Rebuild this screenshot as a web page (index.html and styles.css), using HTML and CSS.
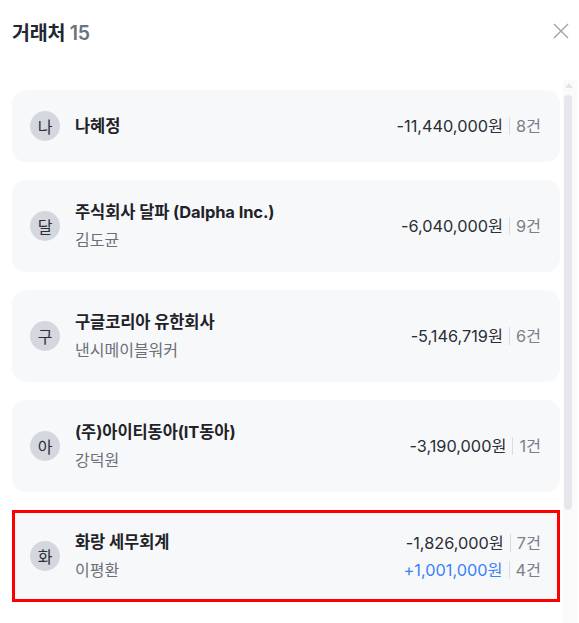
FILE: index.html
```html
<!DOCTYPE html>
<html lang="ko">
<head>
    <meta charset="UTF-8">
    <meta name="viewport" content="width=device-width, initial-scale=1.0">
    <title>거래처</title>
    <link rel="stylesheet" href="styles.css">
</head>
<body>
    <div class="modal">
        <header class="modal-head">
            <h1 class="title">거래처 <span class="count">15</span></h1>
            <button class="close" aria-label="닫기">
                <svg width="16" height="16" viewBox="0 0 16 16"><path d="M1 1L15 15M15 1L1 15" stroke="#9ca3af" stroke-width="1.4" fill="none"/></svg>
            </button>
        </header>

        <div class="body">
            <div class="list">
                <div class="card">
                    <span class="avatar">나</span>
                    <div class="info">
                        <div class="name">나혜정</div>
                    </div>
                    <div class="sums">
                        <div class="sum"><span class="amount">-11,440,000원</span><span class="bar"></span><span class="cnt">8건</span></div>
                    </div>
                </div>

                <div class="card">
                    <span class="avatar">달</span>
                    <div class="info">
                        <div class="name">주식회사 달파 (Dalpha Inc.)</div>
                        <div class="sub">김도균</div>
                    </div>
                    <div class="sums">
                        <div class="sum"><span class="amount">-6,040,000원</span><span class="bar"></span><span class="cnt">9건</span></div>
                    </div>
                </div>

                <div class="card">
                    <span class="avatar">구</span>
                    <div class="info">
                        <div class="name">구글코리아 유한회사</div>
                        <div class="sub">낸시메이블워커</div>
                    </div>
                    <div class="sums">
                        <div class="sum"><span class="amount">-5,146,719원</span><span class="bar"></span><span class="cnt">6건</span></div>
                    </div>
                </div>

                <div class="card">
                    <span class="avatar">아</span>
                    <div class="info">
                        <div class="name">(주)아이티동아(IT동아)</div>
                        <div class="sub">강덕원</div>
                    </div>
                    <div class="sums">
                        <div class="sum"><span class="amount">-3,190,000원</span><span class="bar"></span><span class="cnt">1건</span></div>
                    </div>
                </div>

                <div class="card selected">
                    <span class="avatar">화</span>
                    <div class="info">
                        <div class="name">화랑 세무회계</div>
                        <div class="sub">이평환</div>
                    </div>
                    <div class="sums">
                        <div class="sum"><span class="amount">-1,826,000원</span><span class="bar"></span><span class="cnt">7건</span></div>
                        <div class="sum"><span class="amount plus">+1,001,000원</span><span class="bar"></span><span class="cnt">4건</span></div>
                    </div>
                </div>
            </div>

            <div class="scrollbar">
                <svg class="arrow" width="8" height="5" viewBox="0 0 8 5"><path d="M0 5L4 0L8 5Z" fill="#e3e4e7"/></svg>
                <div class="thumb"></div>
            </div>
        </div>
    </div>
</body>
</html>
```

FILE: styles.css
```css
html, body {
    margin: 0;
    height: 100%;
    overflow: hidden;
}

body {
    font-family: Inter, "Noto Sans CJK KR", sans-serif;
    background: #fff;
    color: #1f2329;
}

.modal {
    display: flex;
    flex-direction: column;
    height: 100%;
}

.modal-head {
    display: flex;
    align-items: center;
    justify-content: space-between;
    height: 62px;
    padding: 0 9px 0 12px;
    flex-shrink: 0;
}

.title {
    margin: 0;
    font-size: 19.5px;
    font-weight: 700;
    color: #222831;
    letter-spacing: -0.2px;
}

.count {
    color: #6b7280;
    font-weight: 600;
}

.close {
    border: 0;
    background: none;
    padding: 0;
    width: 18px;
    height: 18px;
    display: flex;
    align-items: center;
    justify-content: center;
    cursor: pointer;
}

.body {
    flex: 1;
    display: flex;
    margin-top: 18px;
    min-height: 0;
    padding-right: 2px;
}

.list {
    width: 548px;
    padding: 10px 3px 0 12px;
    display: flex;
    flex-direction: column;
    gap: 18px;
    overflow: hidden;
}

.scrollbar {
    width: 14px;
    background: #fafafb;
    display: flex;
    flex-direction: column;
    align-items: flex-start;
}

.arrow {
    margin: 3px 0 0 2px;
}

.thumb {
    margin: 7px 0 0 1px;
    width: 8px;
    height: 415px;
    border-radius: 4px;
    background: #e6e7ea;
}

.card {
    display: flex;
    align-items: center;
    flex-shrink: 0;
    background: #f7f8fa;
    border-radius: 14px;
    padding: 20px 19px 20px 18px;
    min-height: 32px;
}

.card.selected {
    border: 3px solid #f00;
    border-radius: 0;
    padding: 17px 16px 17px 15px;
}

.avatar {
    width: 30px;
    height: 30px;
    border-radius: 50%;
    background: #d4d7dd;
    color: #2b2f36;
    font-size: 16px;
    display: flex;
    align-items: center;
    justify-content: center;
    flex-shrink: 0;
    margin-right: 15px;
}

.info {
    flex: 1;
    display: flex;
    flex-direction: column;
    gap: 4px;
}

.name {
    font-size: 16.5px;
    font-weight: 700;
    line-height: 24px;
    color: #1f2329;
    letter-spacing: -0.1px;
}

.sub {
    font-size: 16px;
    line-height: 24px;
    color: #6b7078;
}

.sums {
    display: flex;
    flex-direction: column;
    align-items: flex-end;
    gap: 3px;
}

.sum {
    display: flex;
    align-items: center;
    font-size: 16.3px;
    line-height: 24px;
}

.amount {
    color: #2a2e35;
}

.amount.plus {
    color: #3b82f6;
}

.bar {
    width: 1px;
    height: 18px;
    background: #d9dce1;
    margin: 0 6px;
}

.cnt {
    color: #7b808a;
}
```
